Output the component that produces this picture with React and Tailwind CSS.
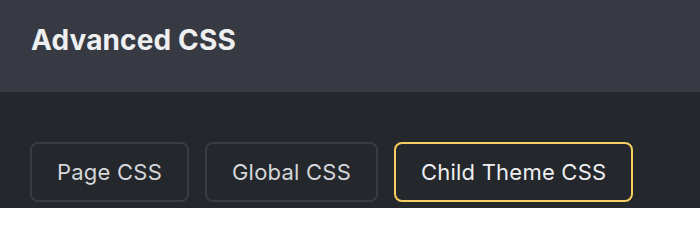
const tabs = [
  { label: 'Page CSS', active: false },
  { label: 'Global CSS', active: false },
  { label: 'Child Theme CSS', active: true },
]

export default function App() {
  return (
    <div className="h-[208px] w-[700px] overflow-hidden bg-[#24272c] font-['Inter',sans-serif]">
      <header className="h-[92px] bg-[#373a42] px-[31px] pt-[23px]">
        <h1 className="text-[28px] leading-[34px] font-bold tracking-[0.005em] text-[#eeeff1]">Advanced CSS</h1>
      </header>

      <div className="flex gap-4 px-[30px] pt-[50px]">
        {tabs.map((t) => (
          <button
            key={t.label}
            className={
              t.active
                ? 'h-[60px] rounded-lg border-2 border-[#f5d061] px-[25px] text-[22px] tracking-[0.01em] text-[#eeeff1]'
                : 'h-[60px] rounded-lg border-2 border-[#393c42] px-[25px] text-[22px] tracking-[0.01em] text-[#d5d7da]'
            }
          >
            {t.label}
          </button>
        ))}
      </div>
    </div>
  )
}
